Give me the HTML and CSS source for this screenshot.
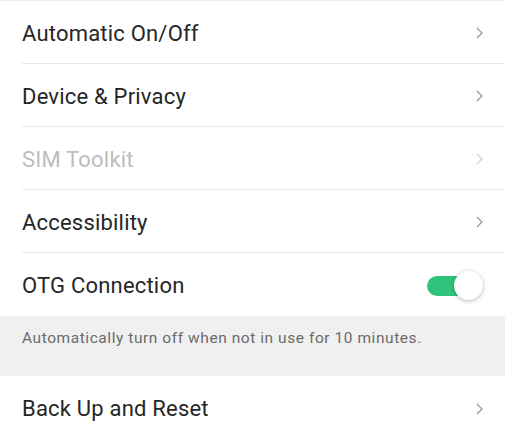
FILE: index.html
```html
<!DOCTYPE html>
<html>
<head>
<meta charset="utf-8">
<link rel="stylesheet" href="styles.css">
</head>
<body>
<div class="screen">
  <div class="group">
    <div class="row"><span class="label">Automatic On/Off</span><svg class="chev" viewBox="0 0 7 12" width="7" height="12"><path d="M1 1 L6 6 L1 11" /></svg></div>
    <div class="row"><span class="label">Device &amp; Privacy</span><svg class="chev" viewBox="0 0 7 12" width="7" height="12"><path d="M1 1 L6 6 L1 11" /></svg></div>
    <div class="row disabled"><span class="label">SIM Toolkit</span><svg class="chev" viewBox="0 0 7 12" width="7" height="12"><path d="M1 1 L6 6 L1 11" /></svg></div>
    <div class="row"><span class="label">Accessibility</span><svg class="chev" viewBox="0 0 7 12" width="7" height="12"><path d="M1 1 L6 6 L1 11" /></svg></div>
    <div class="row last"><span class="label">OTG Connection</span><span class="toggle"><span class="thumb"></span></span></div>
  </div>
  <div class="note">Automatically turn off when not in use for 10 minutes.</div>
  <div class="group">
    <div class="row last"><span class="label">Back Up and Reset</span><svg class="chev" viewBox="0 0 7 12" width="7" height="12"><path d="M1 1 L6 6 L1 11" /></svg></div>
  </div>
</div>
</body>
</html>
```
FILE: styles.css
```css
html, body {
  margin: 0;
  padding: 0;
  background: #ffffff;
}
.screen {
  width: 505px;
  height: 439px;
  overflow: hidden;
  font-family: Roboto, "Noto Sans", sans-serif;
  border-top: 1px solid #ececec;
  box-sizing: border-box;
}
.group {
  background: #ffffff;
}
.row {
  height: 63px;
  margin-left: 22px;
  padding-right: 22px;
  padding-top: 2px;
  display: flex;
  align-items: center;
  justify-content: space-between;
  border-bottom: 1px solid #e8e8e8;
  box-sizing: border-box;
}
.row.last {
  border-bottom: none;
}
.label {
  font-size: 22px;
  letter-spacing: 0.2px;
  color: #262626;
}
.disabled .label {
  color: #bdbdbd;
}
.chev {
  fill: none;
  stroke: #9a9a9a;
  stroke-width: 1.3;
}
.disabled .chev {
  stroke: #d4d4d4;
}
.toggle {
  position: relative;
  width: 49px;
  height: 20px;
  border-radius: 10px;
  background: #2ec47c;
  margin-right: 7px;
}
.thumb {
  position: absolute;
  right: -7px;
  top: -5px;
  width: 29px;
  height: 29px;
  border-radius: 50%;
  background: #ffffff;
  box-shadow: 0 1px 4px rgba(0,0,0,0.28);
}
.note {
  height: 60px;
  background: #f0f0f0;
  padding: 13px 22px 0;
  box-sizing: border-box;
  font-size: 15.5px;
  letter-spacing: 0.56px;
  color: #6b6b6b;
}
```
